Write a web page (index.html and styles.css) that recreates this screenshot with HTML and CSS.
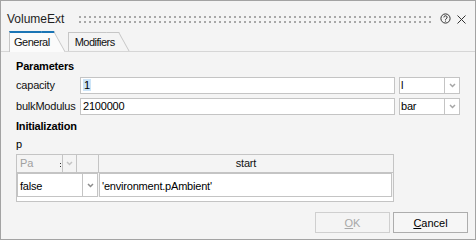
FILE: index.html
```html
<!DOCTYPE html>
<html lang="en">
<head>
    <meta charset="UTF-8">
    <title>VolumeExt</title>
    <link rel="stylesheet" href="styles.css">
</head>
<body>
    <div class="dialog">
        <div class="titlebar">
            <span class="title">VolumeExt</span>
            <span class="grip"></span>
            <svg class="help" viewBox="0 0 11 11">
                <circle cx="5.5" cy="5.5" r="4.6" fill="none" stroke="#333" stroke-width="1"/>
                <path d="M3.9 4.4a1.6 1.6 0 1 1 2.3 1.4c-.5.3-.7.5-.7 1.1" fill="none" stroke="#333" stroke-width="1"/>
                <rect x="5" y="7.6" width="1" height="1" fill="#333"/>
            </svg>
            <svg class="close" viewBox="0 0 9 9">
                <path d="M0.5 0.5L8.5 8.5M8.5 0.5L0.5 8.5" stroke="#333" stroke-width="1"/>
            </svg>
        </div>

        <div class="tabs">
            <div class="tab active">General</div>
            <div class="tab">Modifiers</div>
        </div>

        <div class="pane">
            <div class="group">Parameters</div>
            <div class="paramRow">
                <span class="paramLabel">capacity</span>
                <div class="field"><span class="sel">1</span></div>
                <div class="combo">
                    <span class="comboText">l</span>
                    <span class="comboBtn"><svg class="chev" viewBox="0 0 7 5"><polyline points="1,1 3.5,3.5 6,1" fill="none" stroke="#a6a6a6" stroke-width="1.5"/></svg></span>
                </div>
            </div>
            <div class="paramRow">
                <span class="paramLabel">bulkModulus</span>
                <div class="field">2100000</div>
                <div class="combo">
                    <span class="comboText">bar</span>
                    <span class="comboBtn"><svg class="chev" viewBox="0 0 7 5"><polyline points="1,1 3.5,3.5 6,1" fill="none" stroke="#a6a6a6" stroke-width="1.5"/></svg></span>
                </div>
            </div>

            <div class="group groupInit">Initialization</div>
            <div class="varName">p</div>

            <div class="grid">
                <div class="gridHead">
                    <div class="headCell headUnit"><span>Pa</span><span class="splitter"></span></div>
                    <div class="headCell headArrow"><svg class="chev" viewBox="0 0 7 5"><polyline points="1,1 3.5,3.5 6,1" fill="none" stroke="#c4c4c4" stroke-width="1.5"/></svg></div>
                    <div class="headCell headEmpty"></div>
                    <div class="headStart">start</div>
                </div>
                <div class="gridRow">
                    <div class="cellCombo">
                        <span class="cellText">false</span>
                        <span class="comboBtn"><svg class="chev" viewBox="0 0 7 5"><polyline points="1,1 3.5,3.5 6,1" fill="none" stroke="#8c8c8c" stroke-width="1.5"/></svg></span>
                    </div>
                    <div class="cellValue">'environment.pAmbient'</div>
                </div>
                <div class="gridFoot"></div>
            </div>
        </div>

        <div class="buttons">
            <button class="btn" disabled><u>O</u>K</button>
            <button class="btn"><u>C</u>ancel</button>
        </div>
    </div>
</body>
</html>
```

FILE: styles.css
```css
* {
    box-sizing: border-box;
}

body {
    margin: 0;
    font-family: "Liberation Sans", Arial, sans-serif;
    font-size: 11px;
    line-height: 13px;
    letter-spacing: -0.2px;
    color: #000;
    background-color: #fff;
}

.dialog {
    width: 476px;
    height: 240px;
    border: 1px solid #a3a3a3;
    background-color: #f4f4f4;
    display: flex;
    flex-direction: column;
}

/* title bar */
.titlebar {
    height: 30px;
    display: flex;
    align-items: center;
    padding: 6px 9px 0 6px;
}

.title {
    font-size: 12px;
    line-height: 14px;
    letter-spacing: 0;
    color: #1e1e1e;
}

.grip {
    flex: 1;
    height: 7px;
    margin: 0 9px 0 15px;
    background:
        linear-gradient(90deg, #a8a8a8 2px, transparent 0) 0 0 / 5px 2px repeat-x,
        linear-gradient(90deg, #a8a8a8 2px, transparent 0) 0 5px / 5px 2px repeat-x;
}

.help {
    width: 11px;
    height: 11px;
    margin-right: 6px;
    margin-top: -2px;
}

.close {
    width: 9px;
    height: 9px;
}

/* tabs */
.tabs {
    display: flex;
    height: 21px;
    padding-left: 8px;
    border-bottom: 1px solid #d6d6d6;
}

.tab {
    position: relative;
    z-index: 0;
    height: 19px;
    margin-top: 1px;
    margin-right: 15px;
    padding: 3px 3px 0 6px;
    border-left: 1px solid #c6c6c6;
    border-top: 1px solid #c6c6c6;
    background-color: #f4f4f4;
    letter-spacing: -0.5px;
    color: #111;
}

.tab::after {
    content: "";
    position: absolute;
    z-index: -1;
    top: -1px;
    bottom: 0;
    left: calc(100% - 12px);
    width: 12px;
    border-top: 1px solid #c6c6c6;
    border-right: 1px solid #c6c6c6;
    background-color: #f4f4f4;
    transform: skewX(29deg);
    transform-origin: top left;
}

.tab.active {
    z-index: 1;
    height: 21px;
    margin-top: 0;
    padding-left: 4px;
    border-top: 2px solid #1b75b5;
    background-color: #fbfbfb;
}

.tab.active::after {
    top: -2px;
    border-top: 2px solid #1b75b5;
    background-color: #fbfbfb;
}

/* general pane */
.pane {
    flex: 1;
    padding: 8px 15px 0 15px;
}

.group {
    font-weight: bold;
}

.groupInit {
    margin-top: 5px;
}

.paramRow {
    display: flex;
    align-items: center;
    height: 17px;
    margin-top: 4px;
}

.paramLabel {
    width: 64px;
    color: #111;
}

.field {
    flex: 1;
    height: 17px;
    padding-left: 2px;
    border: 1px solid #c4c4c4;
    background-color: #fff;
    line-height: 15px;
}

.sel {
    background-color: #cce4f7;
    padding: 0 1px;
}

.combo {
    width: 61px;
    height: 17px;
    margin-left: 4px;
    display: flex;
    border: 1px solid #c4c4c4;
    background-color: #fff;
}

.comboText {
    flex: 1;
    padding-left: 1px;
    line-height: 15px;
}

.comboBtn {
    width: 15px;
    border-left: 1px solid #c4c4c4;
    display: flex;
    align-items: center;
    justify-content: center;
}

.chev {
    width: 7px;
    height: 5px;
}

.varName {
    margin-top: 5px;
}

/* start value table */
.grid {
    width: 378px;
    margin-top: 3px;
    border: 1px solid #c4c4c4;
    background-color: #f4f4f4;
}

.gridHead {
    display: flex;
    height: 18px;
    border-bottom: 1px solid #c4c4c4;
    line-height: 17px;
}

.headCell {
    border-right: 1px solid #c4c4c4;
}

.headUnit {
    width: 46px;
    padding: 0 1px 0 3px;
    display: flex;
    align-items: center;
    justify-content: space-between;
    color: #a0a0a0;
}

.splitter {
    width: 1px;
    height: 4px;
    margin-top: 3px;
    background: linear-gradient(#333 1px, transparent 1px, transparent 3px, #333 3px);
}

.headArrow {
    width: 14px;
    display: flex;
    align-items: center;
    justify-content: center;
}

.headEmpty {
    width: 22px;
}

.headStart {
    flex: 1;
    text-align: center;
    color: #111;
}

.gridRow {
    display: flex;
    height: 24px;
}

.cellCombo {
    width: 81px;
    display: flex;
    border: 1px solid #c4c4c4;
    background-color: #fff;
}

.cellText {
    flex: 1;
    padding: 1px 0 0 2px;
    line-height: 22px;
}

.cellValue {
    width: 293px;
    margin-left: 1px;
    padding: 1px 0 0 2px;
    border: 1px solid #c4c4c4;
    background-color: #fff;
    line-height: 22px;
}

.gridFoot {
    height: 4px;
    background-color: #fff;
}

/* dialog buttons */
.buttons {
    display: flex;
    justify-content: flex-end;
    gap: 3px;
    padding: 0 7px 6px 0;
}

.btn {
    width: 75px;
    height: 21px;
    padding: 0;
    font-family: "Liberation Sans", Arial, sans-serif;
    font-size: 11px;
    color: #000;
    border: 1px solid #adadad;
    background-color: #f6f6f6;
}

.btn:disabled {
    color: #a8a8a8;
    border-color: #cfcfcf;
    background-color: #f4f4f4;
}
```
